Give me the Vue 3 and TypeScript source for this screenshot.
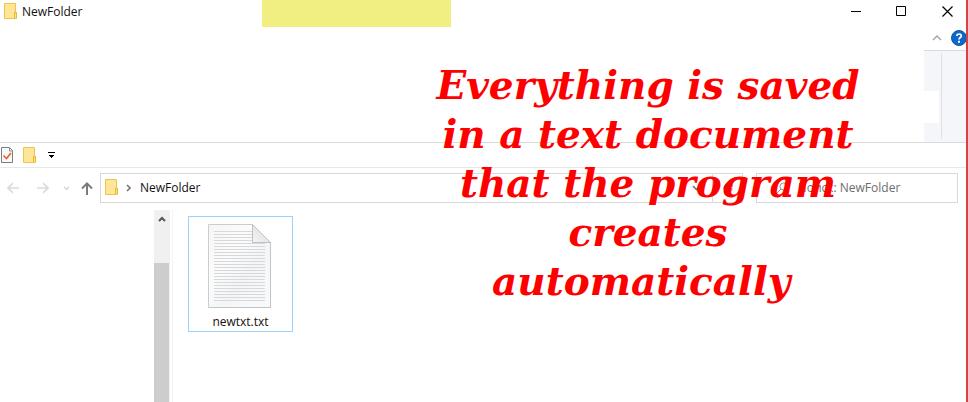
<script setup lang="ts">
import { ref } from 'vue'

const folder = ref('NewFolder')
const query = ref('')
const caption: string[] = [
  'Everything is saved',
  'in a text document',
  'that the program',
  'creates',
  'automatically\u00a0',
]
const textLines: number[] = Array.from({ length: 24 }, (_, i) => 7 + i * 3)
</script>

<template>
  <div class="window">
    <header class="titlebar">
      <svg class="folder" width="13" height="16" viewBox="0 0 13 16" aria-hidden="true">
        <path d="M.5.5h11v9h1v6H.5z" fill="#ffe696" stroke="#eac54f" />
        <path d="M10.500 15V9.500h2V15" fill="#ffe08a" stroke="#e5b932" />
      </svg>
      <h1 class="title">{{ folder }}</h1>
      <span class="highlight"></span>
      <div class="controls">
        <button type="button" aria-label="Minimize">
          <svg width="11" height="11" viewBox="0 0 11 11"><path d="M0 5.500h10" stroke="#000" /></svg>
        </button>
        <button type="button" aria-label="Maximize">
          <svg width="11" height="11" viewBox="0 0 11 11"><path d="M.5.500h9v9h-9z" fill="none" stroke="#000" /></svg>
        </button>
        <button type="button" aria-label="Close">
          <svg width="11" height="11" viewBox="0 0 11 11"><path d="M.5.5l10 10M10.500.5l-10 10" stroke="#000" stroke-width="1.200" /></svg>
        </button>
      </div>
    </header>

    <div class="tabs">
      <button type="button" aria-label="Collapse ribbon">
        <svg width="10" height="6" viewBox="0 0 10 6"><path d="M1 5l4-4 4 4" fill="none" stroke="#a3a3a3" stroke-width="1.400" /></svg>
      </button>
      <button type="button" class="help" aria-label="Help">
        <svg width="16" height="16" viewBox="0 0 16 16">
          <circle cx="8" cy="8" r="7.500" fill="#0c68cb" stroke="#1a559c" />
          <path d="M5.800 6.100C5.800 3.300 10.300 3.400 10.300 5.900C10.300 7.600 8 7.500 8 9.600" fill="none" stroke="#fff" stroke-width="1.700" />
          <path d="M7 10.800h2v2H7z" fill="#fff" />
        </svg>
      </button>
    </div>

    <div class="ribbon">
      <div class="group"><div class="blank"></div></div>
      <div class="group last"></div>
    </div>

    <div class="quick">
      <button type="button" aria-label="Properties">
        <svg width="13" height="16" viewBox="0 0 13 16">
          <path d="M1.500.5h8l3 3v12h-11z" fill="#f8f9fa" stroke="#7d7d7d" />
          <path d="M9.500.5v3.500h3" fill="none" stroke="#8d8d8d" />
          <path d="M3.500 8.500l3 3 4.500-5.500" fill="none" stroke="#eb6126" stroke-width="1.600" />
        </svg>
      </button>
      <button type="button" aria-label="New folder">
        <svg width="13" height="16" viewBox="0 0 13 16">
          <path d="M.5.5h11v9h1v6H.5z" fill="#ffe696" stroke="#eac54f" />
          <path d="M10.500 15V9.500h2V15" fill="#ffe08a" stroke="#e5b932" />
        </svg>
      </button>
      <button type="button" aria-label="Customize toolbar">
        <svg width="7" height="6" viewBox="0 0 7 6"><path d="M0 0h7v1H0zM1 3h5v1H5v1H4v1H3V5H2V4H1z" /></svg>
      </button>
    </div>

    <nav class="navbar">
      <div class="history">
        <button type="button" aria-label="Back">
          <svg width="13" height="12" viewBox="0 0 13 12"><path d="M6 1L1 6l5 5M1 6h11" fill="none" stroke="#dadada" stroke-width="1.700" /></svg>
        </button>
        <button type="button" aria-label="Forward">
          <svg width="13" height="12" viewBox="0 0 13 12"><path d="M7 1l5 5-5 5M12 6H1" fill="none" stroke="#dadada" stroke-width="1.700" /></svg>
        </button>
        <button type="button" aria-label="Recent locations">
          <svg width="7" height="5" viewBox="0 0 7 5"><path d="M1 1l2.500 2.500L6 1" fill="none" stroke="#d6d6d6" stroke-width="1.500" /></svg>
        </button>
        <button type="button" aria-label="Up">
          <svg width="12" height="13" viewBox="0 0 12 13"><path d="M1 6.500L6 1.500l5 5M6 1.500V13" fill="none" stroke="#7b7b7b" stroke-width="2" /></svg>
        </button>
      </div>
      <div class="address">
        <svg class="folder" width="13" height="16" viewBox="0 0 13 16" aria-hidden="true">
          <path d="M.5.5h11v9h1v6H.5z" fill="#ffe696" stroke="#eac54f" />
          <path d="M10.500 15V9.500h2V15" fill="#ffe08a" stroke="#e5b932" />
        </svg>
        <svg width="5" height="8" viewBox="0 0 5 8" aria-hidden="true"><path d="M1 1l3 3-3 3" fill="none" stroke="#777" stroke-width="1.600" /></svg>
        <a href="#folder" class="crumb">{{ folder }}</a>
        <button type="button" class="history-drop" aria-label="Previous locations">
          <svg width="9" height="6" viewBox="0 0 9 6"><path d="M1 1l3.500 3.500L8 1" fill="none" stroke="#777" stroke-width="1.700" /></svg>
        </button>
        <button type="button" class="refresh" aria-label="Refresh">
          <svg width="10" height="12" viewBox="0 0 10 12"><path d="M9 6A4 4 0 1 1 5 2h4M9 0v4.500H5" fill="none" stroke="#777" stroke-width="1.200" /></svg>
        </button>
      </div>
      <label class="search">
        <svg width="12" height="12" viewBox="0 0 12 12" aria-hidden="true"><circle cx="7.500" cy="4.500" r="3.500" fill="none" stroke="#999" /><path d="M5 7L1 11" stroke="#999" /></svg>
        <input v-model="query" type="text" aria-label="Search" placeholder="Поиск: NewFolder" />
      </label>
    </nav>

    <main class="content">
      <div class="tree">
        <div class="scrollbar">
          <button type="button" aria-label="Scroll up">
            <svg width="8" height="6" viewBox="0 0 8 6"><path d="M1 5l3-3 3 3" fill="none" stroke="#555" stroke-width="2" /></svg>
          </button>
          <div class="thumb"></div>
        </div>
      </div>
      <div class="files">
        <button type="button" class="file">
          <svg width="65" height="85" viewBox="0 0 65 85" aria-hidden="true">
            <defs>
              <linearGradient id="paper" x1="0" y1="0" x2="1" y2="1">
                <stop offset="0" stop-color="#f5f5f5" />
                <stop offset=".35" stop-color="#fcfcfc" />
                <stop offset=".6" stop-color="#f3f6f8" />
                <stop offset="1" stop-color="#fafafa" />
              </linearGradient>
              <linearGradient id="fold" x1="0" y1="1" x2="1" y2="0">
                <stop offset="0" stop-color="#f5f5f5" />
                <stop offset="1" stop-color="#d8d8d8" />
              </linearGradient>
            </defs>
            <path d="M.5.5h44l18 18v65H.5z" fill="url(#paper)" stroke="#cdcdcd" />
            <path v-for="y in textLines" :key="y" :d="`M6 ${y}.500H${y < 19 ? 45 : 57}`" stroke="#d6d8d9" />
            <path d="M44.500.5l18 18h-18z" fill="url(#fold)" stroke="#bfc1c2" />
            <path d="M62.500 18.500v65H.5" fill="none" stroke="#c2c4c5" />
          </svg>
          <span>newtxt.txt</span>
        </button>
      </div>
    </main>

    <p class="caption"><span v-for="line in caption" :key="line">{{ line }}</span></p>
  </div>
</template>

<style>
body {
  margin: 0;
  background: #fff;
}
</style>

<style scoped>
.window {
  position: relative;
  display: flex;
  flex-direction: column;
  min-height: 100vh;
  box-sizing: border-box;
  border-right: 2px solid #d14545;
  background: #fff;
  color: #111;
  font: 12px/16px "Open Sans", "Noto Sans", sans-serif;
  overflow: hidden;
}
button {
  display: flex;
  align-items: center;
  justify-content: center;
  margin: 0;
  padding: 0;
  border: 0;
  background: none;
  color: inherit;
  font: inherit;
}
svg {
  display: block;
  flex: none;
}
.titlebar {
  display: flex;
  height: 27px;
}
.titlebar > .folder {
  margin: 3px 5px 0 4px;
}
.title {
  width: 240px;
  margin: 4px 0 0;
  font: inherit;
}
.highlight {
  width: 189px;
  background: #f1ef82;
}
.controls {
  display: flex;
  height: 22px;
  margin-left: auto;
}
.controls button {
  box-sizing: border-box;
  width: 45px;
}
.controls button:last-child {
  width: 42px;
  padding-left: 4px;
}
.tabs {
  display: flex;
  justify-content: flex-end;
  align-items: center;
  gap: 9px;
  height: 23px;
}
.tabs button {
  margin-bottom: 2px;
}
.help {
  margin-right: -1px;
}
.ribbon {
  display: flex;
  justify-content: flex-end;
  height: 92px;
  border-bottom: 1px solid #d9dadc;
}
.group {
  box-sizing: border-box;
  width: 18px;
  padding-top: 40px;
  border-top: 1px solid #d9dadc;
  background: linear-gradient(#dfe1e4, #dfe1e4) right 2px / 1px 86px no-repeat #f4f6f9;
}
.group.last {
  width: 24px;
  background: #f4f6f9;
}
.blank {
  width: 15px;
  height: 32px;
  background: #fff;
}
.quick {
  display: flex;
  align-items: center;
  gap: 10px;
  height: 24px;
  border-bottom: 1px solid #e8e8e8;
}
.quick button:last-child {
  margin-left: 2px;
}
.navbar {
  display: flex;
  gap: 13px;
  padding: 5px 8px 7px 7px;
}
.history {
  display: flex;
  align-items: center;
  gap: 16px;
  width: 80px;
}
.history button:nth-child(3) {
  margin-left: -2px;
}
.history button:nth-child(4) {
  margin-left: -5px;
}
.address {
  display: flex;
  flex: 1;
  align-items: center;
  height: 28px;
  border: 1px solid #d9d9d9;
}
.address > .folder {
  margin: 0 8px 3px 4px;
}
.crumb {
  margin-left: 9px;
  color: inherit;
  text-decoration: none;
}
.history-drop {
  width: 31px;
  margin-left: auto;
}
.refresh {
  box-sizing: border-box;
  width: 30px;
  height: 28px;
  border-left: 1px solid #d9d9d9;
}
.search {
  display: flex;
  align-items: center;
  gap: 10px;
  width: 181px;
  padding-left: 19px;
  border: 1px solid #d9d9d9;
}
.search input {
  flex: 1;
  min-width: 0;
  padding: 0;
  border: 0;
  outline: 0;
  background: none;
  font: inherit;
}
.search input::placeholder {
  color: #6d6d6d;
  opacity: 1;
}
.content {
  display: flex;
  flex: 1;
}
.tree {
  display: flex;
  justify-content: flex-end;
  width: 173px;
  padding-right: 2px;
  box-sizing: border-box;
  border-right: 1px solid #f5f5f5;
}
.scrollbar {
  display: flex;
  flex-direction: column;
  width: 16px;
  background: #f0f0f0;
}
.scrollbar button {
  height: 18px;
  margin-bottom: 35px;
}
.thumb {
  flex: 1;
  width: 15px;
  background: #cdcdcd;
}
.files {
  padding: 6px 15px;
}
.file {
  box-sizing: border-box;
  flex-direction: column;
  justify-content: flex-start;
  gap: 5px;
  width: 105px;
  height: 116px;
  padding-top: 7px;
  border: 1px solid #99d1ff;
}
.caption {
  position: absolute;
  top: 61px;
  left: 398px;
  width: 500px;
  margin: 0;
  color: #f00;
  font: italic bold 39px/49px "DejaVu Serif", serif;
  text-align: center;
  white-space: nowrap;
  pointer-events: none;
}
.caption span {
  display: block;
}
</style>
